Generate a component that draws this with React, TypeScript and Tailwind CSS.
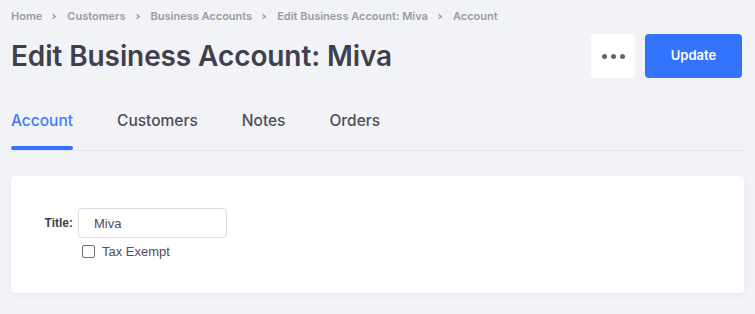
import React from "react";

const crumbs = ["Home", "Customers", "Business Accounts", "Edit Business Account: Miva", "Account"];
const tabs = ["Account", "Customers", "Notes", "Orders"];

const Chevron = () => (
  <svg width="5" height="7" viewBox="0 0 5 7" className="mx-[10px] fill-[#9a9ba3]">
    <path d="M0.6 0.4 L4.4 3.5 L0.6 6.6 L0.6 4.8 L2.2 3.5 L0.6 2.2 Z" />
  </svg>
);

export default function App() {
  return (
    <div className="min-h-screen bg-[#f2f3f7] px-[11px] pt-[9px] font-['Inter',sans-serif]">
      {/* breadcrumbs */}
      <nav className="flex items-center text-[11px] font-semibold text-[#9a9ba3] leading-[14px]">
        {crumbs.map((c, i) => (
          <React.Fragment key={c}>
            {i > 0 && <Chevron />}
            <span>{c}</span>
          </React.Fragment>
        ))}
      </nav>

      {/* header */}
      <div className="mt-[11px] flex items-center justify-between pr-[2px]">
        <h1 className="text-[28px] font-semibold text-[#3f404c] leading-[44px] tracking-[-0.1px]">
          Edit Business Account: Miva
        </h1>
        <div className="flex items-center gap-[10px]">
          <button className="flex h-[44px] w-[44px] items-center justify-center gap-[4px] rounded-[4px] bg-white">
            <span className="h-[5px] w-[5px] rounded-full bg-[#62646f]" />
            <span className="h-[5px] w-[5px] rounded-full bg-[#62646f]" />
            <span className="h-[5px] w-[5px] rounded-full bg-[#62646f]" />
          </button>
          <button className="h-[44px] w-[97px] rounded-[4px] bg-[#3274fe] text-[13px] font-semibold text-white">
            Update
          </button>
        </div>
      </div>

      {/* tabs */}
      <div className="mt-[30px] flex gap-[44px] border-b border-[#e3e4ea]">
        {tabs.map((t, i) => (
          <div key={t} className="relative pb-[18px]">
            <span
              className={`text-[15.5px] font-medium leading-[18px] ${i === 0 ? "text-[#3d7bfa]" : "text-[#4d4e59]"}`}
            >
              {t}
            </span>
            {i === 0 && (
              <div className="absolute bottom-0 left-0 right-0 h-[4px] rounded-full bg-[#3274fe]" />
            )}
          </div>
        ))}
      </div>

      {/* card */}
      <div className="mt-[25px] rounded-[4px] bg-white pt-[32px] pb-[34px] shadow-[0_2px_6px_rgba(30,40,90,0.05)] font-['Liberation_Sans',Arial,sans-serif]">
        <div className="flex items-center">
          <label className="w-[62px] text-right text-[12px] font-bold text-[#3f404c]">Title:</label>
          <input
            defaultValue="Miva"
            className="ml-[5px] h-[30px] w-[149px] rounded-[4px] border border-[#dcdde2] px-[15px] text-[13px] text-[#4d4e59] outline-none"
          />
        </div>
        <label className="ml-[71px] mt-[6px] flex items-center gap-[7px] text-[13px] leading-[15px] text-[#4d4e59]">
          <span className="h-[13px] w-[13px] rounded-[2px] border border-[#6b6d78] bg-white" />
          Tax Exempt
        </label>
      </div>
    </div>
  );
}
